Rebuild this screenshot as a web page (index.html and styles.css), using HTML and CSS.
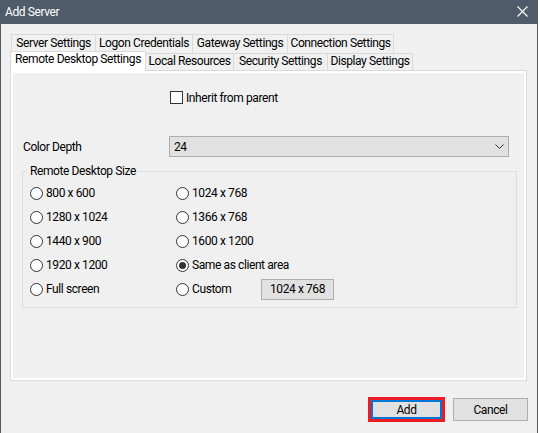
FILE: index.html
```html
<!DOCTYPE html>
<html lang="en">
<head>
    <meta charset="UTF-8">
    <title>Add Server</title>
    <link rel="stylesheet" href="styles.css">
</head>
<body>
    <div class="window">
        <div class="titlebar">
            <span class="title">Add Server</span>
            <svg class="close" width="11" height="11" viewBox="0 0 11 11">
                <path d="M0.5 0.5L10.5 10.5M10.5 0.5L0.5 10.5" stroke="#fff" stroke-width="1.1" fill="none"/>
            </svg>
        </div>

        <div class="content">
            <div class="tabs">
                <div class="tab-row back">
                    <div class="tab w-server">Server Settings</div>
                    <div class="tab w-logon">Logon Credentials</div>
                    <div class="tab w-gateway">Gateway Settings</div>
                    <div class="tab w-connection">Connection Settings</div>
                </div>
                <div class="tab-row front">
                    <div class="tab active w-remote">Remote Desktop Settings</div>
                    <div class="tab w-local">Local Resources</div>
                    <div class="tab w-security">Security Settings</div>
                    <div class="tab w-display">Display Settings</div>
                </div>
            </div>

            <div class="panel">
                <label class="check-row">
                    <span class="checkbox"></span>
                    <span>Inherit from parent</span>
                </label>

                <div class="field-row">
                    <span class="field-label">Color Depth</span>
                    <div class="select">
                        <span>24</span>
                        <svg width="9" height="5" viewBox="0 0 9 5">
                            <path d="M0.5 0.5L4.5 4.5L8.5 0.5" stroke="#333" stroke-width="1" fill="none"/>
                        </svg>
                    </div>
                </div>

                <fieldset class="group">
                    <legend>Remote Desktop Size</legend>
                    <div class="radio-grid">
                        <div class="radio"><span class="circle"></span>800 x 600</div>
                        <div class="radio"><span class="circle"></span>1024 x 768</div>
                        <div class="radio"><span class="circle"></span>1280 x 1024</div>
                        <div class="radio"><span class="circle"></span>1366 x 768</div>
                        <div class="radio"><span class="circle"></span>1440 x 900</div>
                        <div class="radio"><span class="circle"></span>1600 x 1200</div>
                        <div class="radio"><span class="circle"></span>1920 x 1200</div>
                        <div class="radio"><span class="circle checked"></span>Same as client area</div>
                        <div class="radio"><span class="circle"></span>Full screen</div>
                        <div class="radio">
                            <span class="circle"></span>
                            <span class="custom-label">Custom</span>
                            <span class="size-box">1024 x 768</span>
                        </div>
                    </div>
                </fieldset>
            </div>

            <div class="buttons">
                <button class="btn default">Add</button>
                <button class="btn">Cancel</button>
            </div>
        </div>
    </div>
</body>
</html>
```

FILE: styles.css
```css
body {
    margin: 0;
    background-color: #fff;
    font-family: Roboto, "Liberation Sans", sans-serif;
    font-size: 12px;
    letter-spacing: -0.4px;
    color: #000;
}
.window {
    width: 538px;
    height: 433px;
    box-sizing: border-box;
    background-color: #f0f0f0;
    border-left: 1px solid #4f5b69;
    border-right: 1px solid #4f5b69;
}
.titlebar {
    height: 24px;
    background-color: #4f5b69;
    color: #fff;
    display: flex;
    align-items: center;
    justify-content: space-between;
    padding: 0 9px 0 4px;
}
.title {
    font-size: 12px;
}
.close {
    display: block;
    margin-top: -1px;
}
.content {
    padding-left: 9px;
}

/* tabs */
.tabs {
    padding-top: 10px;
}
.tab-row {
    display: flex;
    align-items: flex-start;
}
.tab-row.back {
    height: 19px;
    padding-left: 1px;
}
.tab-row.front {
    height: 17px;
}
.tab {
    box-sizing: border-box;
    border: 1px solid #d9d9d9;
    border-bottom: 0;
    background-color: #f0f0f0;
    text-align: center;
    white-space: nowrap;
}
.tab + .tab {
    margin-left: -1px;
}
.back .tab {
    height: 19px;
    line-height: 16px;
}
.front .tab {
    height: 17px;
    line-height: 15px;
}
.front .tab.active {
    position: relative;
    z-index: 1;
    height: 20px;
    margin-top: -2px;
    background-color: #fff;
}
.w-server { width: 85px; }
.w-logon { width: 98px; }
.w-gateway { width: 96px; }
.w-connection { width: 107px; }
.w-remote { width: 136px; }
.w-local { width: 89px; }
.w-security { width: 95px; }
.w-display { width: 86px; }

/* page */
.panel {
    width: 517px;
    height: 311px;
    box-sizing: border-box;
    border: 1px solid #d9d9d9;
    box-shadow: inset 0 0 0 2px #fff;
}
.check-row {
    display: flex;
    align-items: center;
    gap: 3px;
    height: 17px;
    margin: 18px 0 0 159px;
}
.checkbox {
    width: 13px;
    height: 13px;
    box-sizing: border-box;
    border: 1px solid #333;
    background-color: #fff;
}
.field-row {
    display: flex;
    align-items: center;
    height: 21px;
    margin-top: 30px;
    padding-left: 12px;
}
.field-label {
    width: 146px;
}
.select {
    width: 340px;
    height: 21px;
    box-sizing: border-box;
    border: 1px solid #adadad;
    background-color: #e1e1e1;
    display: flex;
    align-items: center;
    justify-content: space-between;
    padding: 0 4px 0 4px;
}
.select svg {
    display: block;
}

/* group box */
.group {
    width: 495px;
    height: 145px;
    box-sizing: border-box;
    margin: 6px 0 0 11px;
    padding: 2px 4px 0;
    border: 1px solid #dcdcdc;
}
.group legend {
    padding: 0 3px;
    line-height: 16px;
}
.radio-grid {
    display: grid;
    grid-template-columns: 146px 1fr;
    grid-auto-rows: 24px;
    margin-left: 3px;
}
.radio {
    display: flex;
    align-items: center;
    gap: 3px;
}
.circle {
    width: 13px;
    height: 13px;
    box-sizing: border-box;
    border: 1px solid #333;
    border-radius: 50%;
    background-color: #fff;
    display: flex;
    align-items: center;
    justify-content: center;
}
.circle.checked::after {
    content: "";
    width: 7px;
    height: 7px;
    border-radius: 50%;
    background-color: #333;
}
.custom-label {
    width: 66px;
}
.size-box {
    width: 73px;
    height: 21px;
    box-sizing: border-box;
    border: 1px solid #adadad;
    background-color: #e1e1e1;
    text-align: center;
    line-height: 19px;
}

/* buttons */
.buttons {
    display: flex;
    align-items: center;
    justify-content: flex-end;
    height: 23px;
    margin-top: 17px;
    padding-right: 9px;
}
.btn {
    font-family: inherit;
    font-size: 12px;
    letter-spacing: inherit;
    color: #000;
    width: 75px;
    height: 23px;
    box-sizing: border-box;
    border: 1px solid #adadad;
    background-color: #e1e1e1;
    padding: 0;
}
.btn.default {
    width: 71px;
    height: 19px;
    margin-right: 11px;
    border: 2px solid #0078d7;
    box-shadow: 0 0 0 3px #ec1c24;
}
```
